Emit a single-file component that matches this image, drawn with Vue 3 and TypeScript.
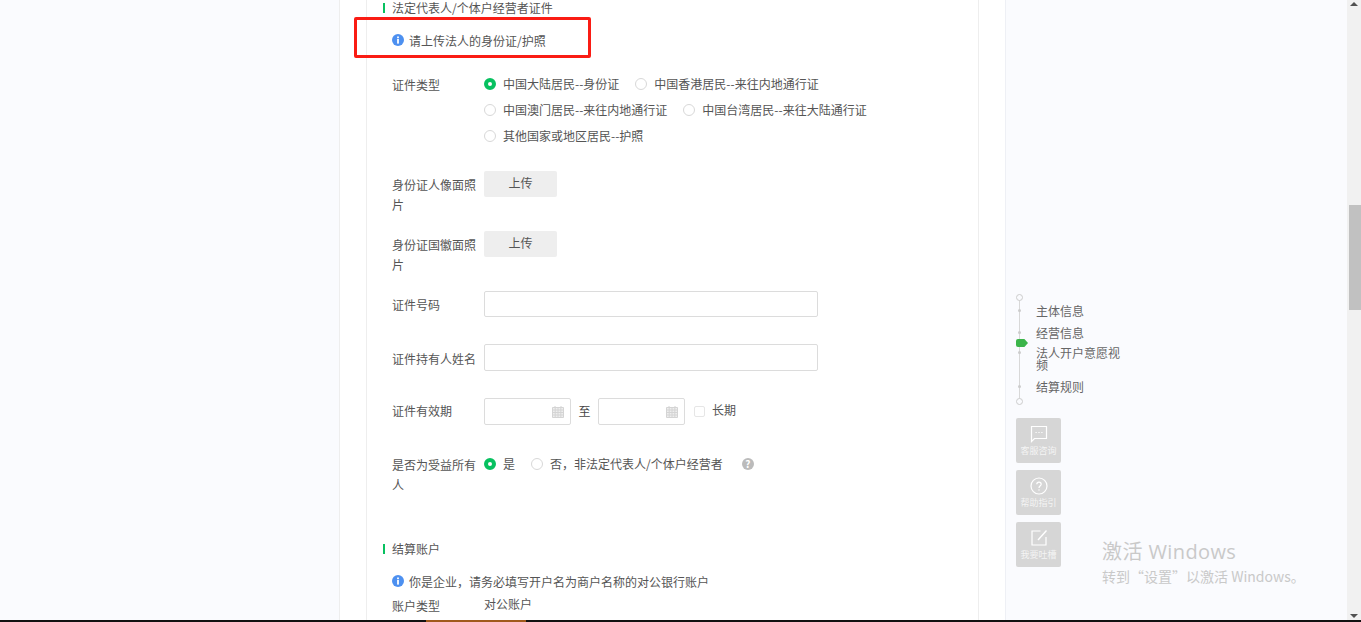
<script setup lang="ts">
const row1 = [
  { text: '中国大陆居民--身份证', on: true },
  { text: '中国香港居民--来往内地通行证', on: false },
]
const row2 = [
  { text: '中国澳门居民--来往内地通行证', on: false },
  { text: '中国台湾居民--来往大陆通行证', on: false },
]
const row3 = [{ text: '其他国家或地区居民--护照', on: false }]
const idRows = [row1, row2, row3]
const steps = [
  { text: '主体信息', cls: 's1' },
  { text: '经营信息', cls: 's2' },
  { text: '法人开户意愿视频', cls: 's3' },
  { text: '结算规则', cls: 's4' },
]
</script>

<template>
  <div class="page">
    <div class="content">
      <div class="gutter"></div>
      <main class="card">
        <div class="title first"><i class="tick"></i>法定代表人/个体户经营者证件</div>
        <div class="notice n1">
          <svg class="info" viewBox="0 0 12 12"><circle cx="6" cy="6" r="6" fill="#4d90f0"/><rect x="5.1" y="5" width="1.8" height="4.6" fill="#fff"/><rect x="5.1" y="2.5" width="1.8" height="1.7" fill="#fff"/></svg>
          <span>请上传法人的身份证/护照</span>
        </div>

        <div class="row r-type">
          <label class="lab">证件类型</label>
          <div class="radios">
            <div v-for="(r, i) in idRows" :key="i" class="radio-line">
              <span v-for="o in r" :key="o.text" class="radio-item">
                <i class="radio" :class="{ on: o.on }"></i><span class="rt">{{ o.text }}</span>
              </span>
            </div>
          </div>
        </div>

        <div class="row r-up1">
          <label class="lab">身份证人像面照片</label>
          <button class="upload">上传</button>
        </div>
        <div class="row r-up2">
          <label class="lab">身份证国徽面照片</label>
          <button class="upload">上传</button>
        </div>

        <div class="row r-in1">
          <label class="lab mid">证件号码</label>
          <div class="input"></div>
        </div>
        <div class="row r-in2">
          <label class="lab mid">证件持有人姓名</label>
          <div class="input tall"></div>
        </div>

        <div class="row r-date">
          <label class="lab mid">证件有效期</label>
          <div class="date">
            <svg class="cal" viewBox="0 0 12 12"><path d="M0.5 1.5H11.5V11.5H0.5ZM0.5 4H11.5M0.5 6.5H11.5M0.5 9H11.5M3.2 1.5V11.5M6 1.5V11.5M8.8 1.5V11.5M3 0V2M9 0V2" fill="#eee" stroke="#d4d4d4" stroke-width="1"/></svg>
          </div>
          <span class="to">至</span>
          <div class="date">
            <svg class="cal" viewBox="0 0 12 12"><path d="M0.5 1.5H11.5V11.5H0.5ZM0.5 4H11.5M0.5 6.5H11.5M0.5 9H11.5M3.2 1.5V11.5M6 1.5V11.5M8.8 1.5V11.5M3 0V2M9 0V2" fill="#eee" stroke="#d4d4d4" stroke-width="1"/></svg>
          </div>
          <i class="check"></i>
          <span class="long">长期</span>
        </div>

        <div class="row r-owner">
          <label class="lab">是否为受益所有人</label>
          <div class="owner">
            <span class="radio-item yes"><i class="radio on"></i><span class="rt">是</span></span>
            <span class="radio-item"><i class="radio"></i><span class="rt">否，非法定代表人/个体户经营者</span></span>
            <i class="help">?</i>
          </div>
        </div>

        <div class="title second"><i class="tick"></i>结算账户</div>
        <div class="notice n2">
          <svg class="info" viewBox="0 0 12 12"><circle cx="6" cy="6" r="6" fill="#4d90f0"/><rect x="5.1" y="5" width="1.8" height="4.6" fill="#fff"/><rect x="5.1" y="2.5" width="1.8" height="1.7" fill="#fff"/></svg>
          <span>你是企业，请务必填写开户名为商户名称的对公银行账户</span>
        </div>
        <div class="row r-acc">
          <label class="lab">账户类型</label>
          <span class="acc">对公账户</span>
        </div>

        <div class="redbox"></div>
      </main>

      <aside class="side">
        <div class="stepper">
          <i class="rail"></i>
          <i class="ring top"></i>
          <i class="ring bottom"></i>
          <i class="flag"></i>
          <div v-for="s in steps" :key="s.text" class="step" :class="s.cls">
            <i class="dot"></i><span>{{ s.text }}</span>
          </div>
        </div>
        <button class="tool">
          <svg viewBox="0 0 18 18"><path d="M1.5 1.5H16.5V13.5H4.5L1.5 16.5Z" fill="none" stroke="#fff" stroke-width="1.2"/><path d="M5.5 7.5H6.7M8.4 7.5H9.6M11.3 7.5H12.5" stroke="#fff" stroke-width="1.2"/></svg>
          <span>客服咨询</span>
        </button>
        <button class="tool">
          <svg viewBox="0 0 18 18"><circle cx="9" cy="9" r="8" fill="none" stroke="#fff" stroke-width="1.2"/><path d="M6.8 7.2C6.8 4.4 11.2 4.4 11.2 7.2C11.2 8.8 9 8.8 9 11" fill="none" stroke="#fff" stroke-width="1.2"/><rect x="8.4" y="12.3" width="1.2" height="1.3" fill="#fff"/></svg>
          <span>帮助指引</span>
        </button>
        <button class="tool">
          <svg viewBox="0 0 18 18"><path d="M10.5 2H2V16H16V8" fill="none" stroke="#fff" stroke-width="1.2"/><path d="M16.5 1.5L8 11" fill="none" stroke="#fff" stroke-width="1.4"/></svg>
          <span>我要吐槽</span>
        </button>
      </aside>

      <div class="scrollbar">
        <i class="arrow up"></i>
        <i class="thumb"></i>
        <i class="arrow down"></i>
      </div>

      <div class="activate">
        <div class="a1">激活 Windows</div>
        <div class="a2">转到“设置”以激活 Windows。</div>
      </div>
    </div>
    <div class="taskbar"><i class="task-item"></i></div>
  </div>
</template>

<style>
html, body { margin: 0; padding: 0; overflow: hidden; background: #fafbfe; }
</style>

<style scoped>
.page {
  width: 1361px;
  height: 622px;
  display: flex;
  flex-direction: column;
  overflow: hidden;
  font-family: "Noto Sans CJK SC", "Liberation Sans", sans-serif;
  font-size: 12px;
  color: #555;
  background: #fafbfe;
}
.content { position: relative; flex: 1; display: flex; min-height: 0; }
.gutter { width: 339px; flex: none; }
.card {
  position: relative;
  width: 666px;
  flex: none;
  box-sizing: border-box;
  padding-left: 44px;
  background:
    linear-gradient(#eee, #eee) 0 0 / 1px 100% no-repeat,
    linear-gradient(#eee, #eee) 27px 0 / 1px 100% no-repeat,
    linear-gradient(#eee, #eee) 639px 0 / 1px 100% no-repeat,
    #fff;
}
.title { display: flex; align-items: center; height: 16px; line-height: 16px; }
.second { margin-top: 49px; }
.tick { width: 2px; height: 10px; background: #07c160; margin-right: 7px; }
.notice { display: flex; align-items: center; height: 16px; margin-left: 9px; }
.n1 { margin-top: 16px; }
.n2 { margin-top: 16px; }
.info { width: 12px; height: 12px; margin-right: 5px; flex: none; }
.row { display: flex; margin-left: 9px; }
.lab { width: 92px; flex: none; padding-right: 4px; box-sizing: border-box; line-height: 20px; }
.lab.mid { align-self: center; padding-top: 2px; }
.r-type { margin-top: 27px; }
.radios { margin-top: -4px; }
.radio-line { display: flex; height: 26px; align-items: center; }
.radio-item { display: inline-flex; align-items: center; margin-right: 16px; }
.rt { margin-top: -2px; }
.radio {
  width: 12px; height: 12px; border-radius: 50%;
  box-sizing: border-box;
  border: 1px solid #d8d8d8;
  margin-right: 7px;
  background: #fff;
}
.radio.on { border: 4px solid #07c160; }
.r-up1 { margin-top: 22px; height: 40px; }
.r-up2 { margin-top: 20px; height: 40px; }
.r-up1 .lab, .r-up2 .lab { padding-top: 4px; }
.upload {
  width: 73px; height: 26px; border: 0; padding: 0 0 4px;
  background: #eee; border-radius: 2px;
  color: #555; font: inherit;
}
.input {
  width: 334px; height: 26px; box-sizing: border-box;
  border: 1px solid #dcdcdc; border-radius: 2px; background: #fff;
}
.input.tall { height: 27px; }
.r-in1 { margin-top: 20px; }
.r-in2 { margin-top: 27px; }
.r-date { margin-top: 27px; align-items: center; height: 27px; }
.r-date .lab.mid { padding-top: 0; margin-top: -2px; }
.date {
  position: relative;
  width: 87px; height: 27px; box-sizing: border-box;
  border: 1px solid #dcdcdc; border-radius: 2px; background: #fff;
}
.cal { position: absolute; right: 6px; top: 7px; width: 12px; height: 12px; }
.to { width: 27px; text-align: center; margin-top: -3px; color: #444; }
.check {
  width: 11px; height: 11px; margin-left: 9px; margin-right: 7px;
  box-sizing: border-box; border: 1px solid #e6e6e6; border-radius: 2px;
}
.long { margin-top: -4px; }
.r-owner { margin-top: 27px; height: 40px; }
.r-owner .lab { padding-top: 3px; }
.owner { display: flex; align-items: center; height: 20px; margin-top: 2px; }
.yes { margin-right: 16px; }
.help {
  width: 12px; height: 12px; border-radius: 50%;
  background: #bbb; color: #fff;
  font-style: normal; font-size: 10px; font-weight: 700;
  line-height: 12px; text-align: center;
  margin-left: 3px;
}
.r-acc { margin-top: 7px; height: 20px; }
.acc { margin-top: -1px; }
.redbox {
  position: absolute;
  left: 15px; top: 17px;
  width: 237px; height: 41px;
  box-sizing: border-box;
  border: 3px solid #fa1c14;
  border-radius: 2px;
}
.side {
  flex: 1;
  box-sizing: border-box;
  border-left: 1px solid #eef0f5;
  padding: 297px 0 0 10px;
  display: flex;
  flex-direction: column;
  align-items: flex-start;
}
.stepper { position: relative; width: 110px; height: 104px; margin-bottom: 17px; }
.rail { position: absolute; left: 3px; top: 0; width: 1px; height: 104px; background: #d8d8d8; }
.ring {
  position: absolute; left: 0; width: 7px; height: 7px;
  box-sizing: border-box; border: 1px solid #ccc; border-radius: 50%; background: #fafbfe;
}
.ring.top { top: -3px; }
.ring.bottom { top: 101px; }
.flag {
  position: absolute; left: 0; top: 42px; width: 12px; height: 8px;
  background: #3bb54a;
  clip-path: polygon(0 0, 70% 0, 100% 50%, 70% 100%, 0 100%);
  border-radius: 2px;
}
.step { position: absolute; left: 20px; width: 84px; line-height: 12px; color: #666; }
.step span { display: block; }
.dot { position: absolute; left: -18px; top: 4px; width: 3px; height: 3px; border-radius: 50%; background: #ccc; }
.s1 { top: 8px; }
.s2 { top: 30px; }
.s3 { top: 50px; }
.s4 { top: 84px; }
.tool {
  width: 45px; height: 45px; flex: none;
  margin-bottom: 7px;
  border: 0; padding: 7px 0 0;
  background: #d6d6d6; border-radius: 2px;
  display: flex; flex-direction: column; align-items: center;
  color: #fff; font: inherit; font-size: 9px; line-height: 12px;
}
.tool svg { width: 18px; height: 18px; margin-bottom: 2px; }
.tool span { color: #f4f4f4; white-space: nowrap; }
.scrollbar {
  position: absolute; right: 0; top: 0; bottom: 0; width: 14px;
  background: #f1f1f1;
}
.arrow { position: absolute; left: 3px; width: 0; height: 0; border-left: 4px solid transparent; border-right: 4px solid transparent; }
.arrow.up { top: 2px; border-bottom: 4px solid #505050; }
.arrow.down { bottom: 2px; border-top: 4px solid #505050; }
.thumb { position: absolute; left: 2px; right: 0; top: 205px; height: 105px; background: #c1c1c1; }
.activate { position: absolute; left: 1102px; top: 540px; color: #c9c9c9; }
.a1 { font-family: "Open Sans", "Noto Sans CJK SC", sans-serif; font-size: 20px; line-height: 24px; letter-spacing: 0.4px; }
.a2 { font-family: "Noto Sans CJK SC", sans-serif; font-size: 14px; line-height: 22px; margin-top: 1px; }
.taskbar { height: 2px; flex: none; background: #111; position: relative; }
.task-item { position: absolute; left: 426px; top: 0; width: 100px; height: 2px; background: #a0591c; }
</style>
